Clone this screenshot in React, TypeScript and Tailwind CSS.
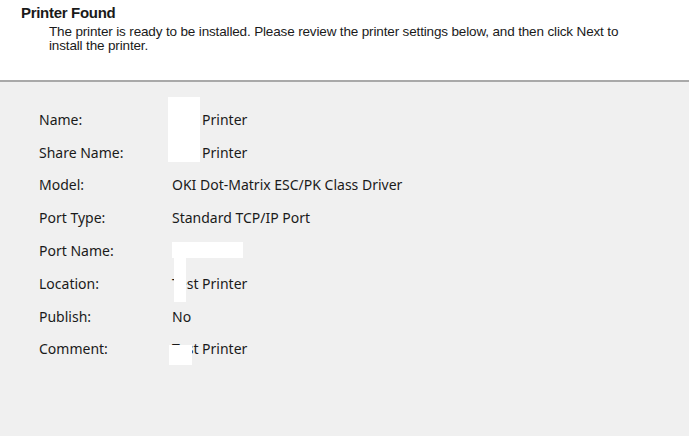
const rows: [string, string][] = [
  ["Name:", "Test Printer"],
  ["Share Name:", "Test Printer"],
  ["Model:", "OKI Dot-Matrix ESC/PK Class Driver"],
  ["Port Type:", "Standard TCP/IP Port"],
  ["Port Name:", ""],
  ["Location:", "Test Printer"],
  ["Publish:", "No"],
  ["Comment:", "Test Printer"],
];

export default function App() {
  return (
    <div className="relative w-[689px] h-[436px] overflow-hidden bg-[#f0f0f0] font-['Liberation_Sans',Arial,sans-serif] text-[#1a1a1a]">
      {/* header */}
      <div className="h-[82px] bg-white border-b-2 border-[#a9a9a9] pl-[21px] pt-[4px]">
        <div className="text-[15px] font-bold leading-[17px] tracking-[-0.3px]">Printer Found</div>
        <p className="mt-[4px] pl-[28px] w-[630px] text-[13.5px] leading-[14px] tracking-[-0.15px]">
          The printer is ready to be installed. Please review the printer settings below, and then click Next to install the printer.
        </p>
      </div>

      {/* settings */}
      <div className="pt-[21px] pl-[39px] font-['Noto_Sans',sans-serif] text-[14px]">
        {rows.map(([label, value]) => (
          <div key={label} className="flex items-center h-[32.8px]">
            <div className="w-[133px]">{label}</div>
            <div>{value}</div>
          </div>
        ))}
      </div>

      {/* redaction patches */}
      <div className="absolute left-[168px] top-[97px] w-[32px] h-[65px] bg-white" />
      <div className="absolute left-[172px] top-[242px] w-[71px] h-[16px] bg-white" />
      <div className="absolute left-[174px] top-[258px] w-[12px] h-[44px] bg-white" />
      <div className="absolute left-[169px] top-[345px] w-[23px] h-[20px] bg-white" />
    </div>
  );
}
